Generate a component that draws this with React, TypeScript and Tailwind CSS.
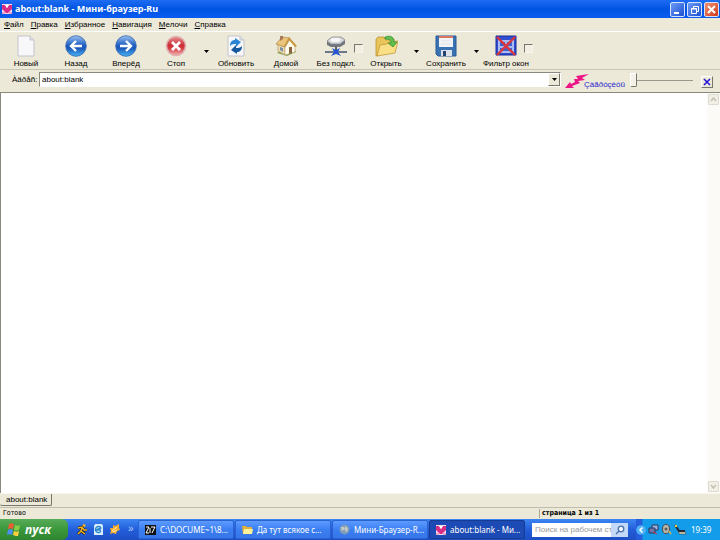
import type { ReactNode } from 'react';

const MENU = ['Файл', 'Правка', 'Избранное', 'Навигация', 'Мелочи', 'Справка'];

function AppIcon() {
  return (
    <svg width="10" height="10" viewBox="0 0 10 10" className="shrink-0">
      <rect width="10" height="10" fill="#f7dcec" />
      <path d="M0 1h3l2 3 2-3h3v4L6 9H4L0 5z" fill="#d92c86" />
      <path d="M3 1h4L5 4z" fill="#fff" />
      <path d="M0 8h3v2H0zM7 8h3v2H7z" fill="#e3a5ca" />
    </svg>
  );
}

function PageIcon({ children }: { children?: ReactNode }) {
  return (
    <svg width="22" height="22" viewBox="0 0 22 22">
      <path d="M3 1h12l4 4v16H3z" fill="#f8f8fb" stroke="#c3c3cb" />
      <path d="M15 1v4h4" fill="#e2e2ea" stroke="#c3c3cb" />
      {children}
    </svg>
  );
}

function RefreshIcon() {
  return (
    <PageIcon>
      <path d="M5 11c0-4 2-6 5-6V3l6 4-5 5V9c-2 0-4 0-6 2z" fill="#2a86d4" />
      <path d="M17 11c0 4-2 6-5 6v2l-6-4 5-5v3c2 0 4 0 6-2z" fill="#17599f" />
    </PageIcon>
  );
}

function RoundIcon({ kind }: { kind: 'back' | 'forward' | 'stop' }) {
  const red = kind === 'stop';
  return (
    <svg width="22" height="22" viewBox="0 0 22 22">
      <defs>
        <linearGradient id={`disc-${kind}`} x1="0" y1="0" x2="0" y2="1">
          <stop offset="0" stopColor={red ? '#e89292' : '#9fc0ee'} />
          <stop offset=".45" stopColor={red ? '#cb2f35' : '#2061c4'} />
          <stop offset=".6" stopColor={red ? '#d13b40' : '#1a56b8'} />
          <stop offset="1" stopColor={red ? '#f4b0b0' : '#49b4f4'} />
        </linearGradient>
      </defs>
      <circle cx="11" cy="11" r={red ? 9.5 : 10.3} fill={`url(#disc-${kind})`} stroke={red ? '#e0b0b0' : '#3567b4'} strokeWidth={red ? 1.6 : 0.8} />
      {kind === 'back' && <path d="M17 11H6M11 6l-5 5 5 5" fill="none" stroke="#fff" strokeWidth="2.4" />}
      {kind === 'forward' && <path d="M5 11h11M11 6l5 5-5 5" fill="none" stroke="#fff" strokeWidth="2.4" />}
      {red && <path d="M7 7l8 8M15 7l-8 8" stroke="#fff" strokeWidth="2.8" />}
    </svg>
  );
}

function HomeIcon() {
  return (
    <svg width="22" height="22" viewBox="0 0 22 22">
      <path d="M2 18l3-2 6 2 9-3 1 2-9 4z" fill="#8aa552" />
      <path d="M3 9l7 3v8l-7-4z" fill="#efdcb0" stroke="#a58c62" strokeWidth=".6" />
      <path d="M10 12l5-7 5 6v6l-10 3z" fill="#fffaea" stroke="#b39c70" strokeWidth=".6" />
      <path d="M1 9l6-7 8 1-5 9z" fill="#eac47a" stroke="#a27c40" strokeWidth=".6" />
      <path d="M14 2l8 9-2 1-6-7-4 7-1-1z" fill="#c9963f" />
      <path d="M5 1h3v3L5 6z" fill="#a97b56" />
      <path d="M14 12h3v6l-3 1z" fill="#8a6440" />
      <path d="M5 12l3 1v4l-3-2z" fill="#7b8fa5" />
    </svg>
  );
}

function OfflineIcon() {
  return (
    <svg width="24" height="22" viewBox="0 0 24 22">
      <path d="M3 6l5-4h9l4 3v4l-5 3H7l-4-2z" fill="#73767c" />
      <path d="M3 6l5-4h9l4 3-5 4H7z" fill="#d6d7db" stroke="#85868b" strokeWidth=".7" />
      <path d="M8 3h7l2 2-3 2H8L6 5z" fill="#f6f6f7" />
      <path d="M1 17h22" stroke="#6c7888" strokeWidth="2" />
      <path d="M12 12v4" stroke="#555e68" strokeWidth="2" />
      <path d="M8 13l4 2 4-2-2 4 3 4-5-2-5 2 3-4z" fill="#2355d5" />
    </svg>
  );
}

function OpenIcon() {
  return (
    <svg width="23" height="22" viewBox="0 0 23 22">
      <path d="M1 4l2-2h6l2 3 8-1v5L5 20l-4 1z" fill="#e9c559" stroke="#b18a2c" strokeWidth=".7" />
      <path d="M2 21L5 10l7-1 2-2 9-1-3 12z" fill="#fbdf86" stroke="#c39a38" strokeWidth=".8" />
      <path d="M10 2c6-2 9 0 9 5h3l-4 5-5-4h3c0-3-2-4-6-4z" fill="#62bf4d" stroke="#2c8b32" strokeWidth=".7" />
    </svg>
  );
}

function SaveIcon() {
  return (
    <svg width="22" height="22" viewBox="0 0 22 22">
      <path d="M1 1h20v20H3l-2-2z" fill="#3b73b2" stroke="#285a98" />
      <path d="M4 1h14v11H4z" fill="#f3f4f7" />
      <path d="M4 1h14v2H4z" fill="#da765e" />
      <path d="M6 6h10M6 9h10" stroke="#dfe1e7" />
      <path d="M6 15h11v6H6z" fill="#dce1e9" />
      <path d="M8 16h3v5H8z" fill="#23446f" />
    </svg>
  );
}

function FilterIcon() {
  return (
    <svg width="22" height="22" viewBox="0 0 22 22">
      <path d="M1 1h20v19H1z" fill="#2f4fd0" stroke="#1c2f9c" />
      <path d="M3 5h16v13H3z" fill="#a9bbf0" />
      <path d="M5 7h5v4H5zM12 7h5v4h-5zM5 13h12v3H5z" fill="#3f62d2" />
      <path d="M2 2l18 18M20 2L2 20" stroke="#d8363e" strokeWidth="2.4" />
    </svg>
  );
}

function Tool({ label, icon, menu, check }: { label: string; icon: ReactNode; menu?: boolean; check?: boolean }) {
  return (
    <div className="flex shrink-0">
      <div className="relative w-[50px]">
        <button className="flex w-full flex-col items-center gap-[2px]">
          {icon}
          <span className="whitespace-nowrap leading-[10px]">{label}</span>
        </button>
        {check && (
          <input
            type="checkbox"
            aria-label={label}
            className="absolute left-[43px] top-[9px] size-[9px] appearance-none border border-[#f7f5ec] border-l-[#77756c] border-t-[#77756c] bg-[#f2efe2]"
          />
        )}
      </div>
      {menu && (
        <button aria-label={`${label}: список`} className="flex w-[10px] justify-center pt-[15px]">
          <svg width="5" height="3" viewBox="0 0 5 3"><path d="M0 0h5L2.500 3z" fill="#000" /></svg>
        </button>
      )}
    </div>
  );
}

function WindowButton({ kind }: { kind: 'min' | 'restore' | 'close' }) {
  const tone = kind === 'close' ? 'bg-linear-to-br from-[#f09070] to-[#cf3512]' : 'bg-linear-to-br from-[#6d9af5] to-[#1c4fd0]';
  return (
    <button aria-label={kind} className={`size-[15px] rounded-[2px] border border-[#d5e2fb] ${tone}`}>
      <svg width="13" height="13" viewBox="0 0 13 13" fill="none" stroke="#fff">
        {kind === 'min' && <path d="M3 10h5" strokeWidth="2" />}
        {kind === 'restore' && <path d="M5.500 5V3.500h5v5H9M3.500 5.500h5v5h-5zM3 6h6" />}
        {kind === 'close' && <path d="M3 3l7 7M10 3l-7 7" strokeWidth="2" />}
      </svg>
    </button>
  );
}

function ScrollButton({ up }: { up?: boolean }) {
  return (
    <button aria-label={up ? 'Вверх' : 'Вниз'} className="flex size-[11px] items-center justify-center rounded-[1px] border border-[#dddbd0] bg-[#f1efe6]">
      <svg width="7" height="5" viewBox="0 0 7 5" fill="none" stroke="#c3c1b5" strokeWidth="1.500">
        <path d={up ? 'M1 4l2.500-3L6 4' : 'M1 1l2.500 3L6 1'} />
      </svg>
    </button>
  );
}

function Folder() {
  return (
    <svg width="11" height="10" viewBox="0 0 11 10" className="shrink-0">
      <path d="M0 1h4l1 1h5v7H1z" fill="#dfb13a" />
      <path d="M1 9l1-5h9l-1 5z" fill="#fff09a" />
    </svg>
  );
}

function Task({ icon, text, active }: { icon: ReactNode; text: string; active?: boolean }) {
  const tone = active ? 'bg-[#1c4bb5] border-[#153b92]' : 'bg-linear-to-b from-[#5c9bff] via-[#3c7ff2] to-[#3576e8] border-[#2b62cf]';
  return (
    <button className={`flex h-[19px] min-w-[96px] items-center gap-[4px] whitespace-nowrap rounded-[2px] border pl-[6px] text-white ${tone}`}>
      {icon}
      {text}
    </button>
  );
}

export default function App() {
  return (
    <div className="flex h-screen flex-col overflow-hidden bg-[#ece9d8] font-['Liberation_Sans','Noto_Sans',sans-serif] text-[8px] leading-[10px] text-black">
      <header className="flex h-[18px] shrink-0 items-center gap-[3px] bg-linear-to-b from-[#1d6cf2] via-[#0054e3] to-[#0a5cf0] pl-[2px] pr-[1px]">
        <AppIcon />
        <h1 className="flex-1 font-['Noto_Sans',sans-serif] text-[9px] font-bold text-white">about:blank - Мини-браузер-Ru</h1>
        <div className="flex gap-[2px]">
          <WindowButton kind="min" />
          <WindowButton kind="restore" />
          <WindowButton kind="close" />
        </div>
      </header>

      <nav className="flex h-[14px] shrink-0 items-center gap-[7px] border-b border-white pl-[4px]">
        {MENU.map((m) => (
          <button key={m}><u>{m[0]}</u>{m.slice(1)}</button>
        ))}
      </nav>

      <div className="flex h-[38px] shrink-0 border-b border-[#c9c6b8] pl-[1px] pt-[3px]">
        <Tool label="Новый" icon={<PageIcon />} />
        <Tool label="Назад" icon={<RoundIcon kind="back" />} />
        <Tool label="Вперёд" icon={<RoundIcon kind="forward" />} />
        <Tool label="Стоп" icon={<RoundIcon kind="stop" />} menu />
        <Tool label="Обновить" icon={<RefreshIcon />} />
        <Tool label="Домой" icon={<HomeIcon />} />
        <Tool label="Без подкл." icon={<OfflineIcon />} check />
        <Tool label="Открыть" icon={<OpenIcon />} menu />
        <Tool label="Сохранить" icon={<SaveIcon />} menu />
        <Tool label="Фильтр окон" icon={<FilterIcon />} check />
      </div>

      <form className="flex h-[22px] shrink-0 items-start pl-[12px] pr-[7px] pt-[2px]" onSubmit={(e) => e.preventDefault()}>
        <label htmlFor="address" className="w-[27px] pt-[3px]">Àäðåñ:</label>
        <div className="flex h-[15px] min-w-0 flex-1 border border-[#8b897e] border-b-white border-r-white bg-white">
          <input id="address" defaultValue="about:blank" className="min-w-0 flex-1 px-[2px] outline-none" />
          <button type="button" aria-label="Список адресов" className="flex w-[12px] items-center justify-center border border-white border-b-[#77756c] border-r-[#77756c] bg-[#ece9d8]">
            <svg width="5" height="3" viewBox="0 0 5 3"><path d="M0 0h5L2.500 3z" fill="#000" /></svg>
          </button>
        </div>
        <button type="submit" className="flex w-[66px] items-start pl-[4px] pt-[1px] text-[#2a1fd0]">
          <svg width="24" height="16" viewBox="0 0 24 16" className="shrink-0">
            <path d="M24 1L11 3l2 3-4 0 1 3-4 2-1-2L0 15l9 0-2-2 8-3-2-2 7-1-3-2z" fill="#ed1586" />
          </svg>
          <span className="-ml-[5px] pt-[7px]">Çàãðóçèòü</span>
        </button>
        <input
          type="range"
          aria-label="Масштаб"
          defaultValue="0"
          className="ml-[3px] mr-[8px] h-[16px] w-[63px] appearance-none bg-[linear-gradient(#9b998e,#9b998e)] bg-[length:100%_1px] bg-center bg-no-repeat [&::-webkit-slider-thumb]:h-[14px] [&::-webkit-slider-thumb]:w-[7px] [&::-webkit-slider-thumb]:appearance-none [&::-webkit-slider-thumb]:rounded-b-[2px] [&::-webkit-slider-thumb]:border [&::-webkit-slider-thumb]:border-white [&::-webkit-slider-thumb]:border-b-[#77756c] [&::-webkit-slider-thumb]:border-r-[#77756c] [&::-webkit-slider-thumb]:bg-[#f4f2e8]"
        />
        <button type="button" aria-label="Закрыть" className="mt-[4px] flex size-[12px] items-center justify-center border border-white border-b-[#77756c] border-r-[#77756c]">
          <svg width="8" height="8" viewBox="0 0 8 8"><path d="M1 1l6 6M7 1L1 7" stroke="#2b16d8" strokeWidth="1.600" /></svg>
        </button>
      </form>

      <main className="flex min-h-0 flex-1 border-l border-t border-[#8b897e] bg-white">
        <div className="flex-1" />
        <div className="flex w-[13px] flex-col items-center justify-between bg-[#fbfaf7] py-px">
          <ScrollButton up />
          <ScrollButton />
        </div>
      </main>

      <div className="flex h-[14px] shrink-0 items-start border-t border-[#f7f5ec]">
        <button className="h-[12px] rounded-b-[2px] border-b border-r border-[#77756c] pl-[6px] pr-[4px]">about:blank</button>
      </div>
      <footer className="flex h-[12px] shrink-0 items-center border-t border-[#c0bdae] font-['DejaVu_Sans_Condensed','DejaVu_Sans',sans-serif] text-[7px] leading-[9px]">
        <span className="flex-1 pl-[3px]">Готово</span>
        <span className="w-[181px] border-l border-[#aca899] pl-[2px] font-bold">страница 1 из 1</span>
      </footer>

      <div className="flex h-[21px] shrink-0 items-center bg-linear-to-b from-[#3d86f3] via-[#245edb] to-[#1c4ec4] text-white">
        <button className="flex h-full w-[68px] items-center gap-[4px] rounded-r-[6px] bg-linear-to-b from-[#58ab58] via-[#3b983b] to-[#2f852f] pl-[7px] font-['Open_Sans','Noto_Sans',sans-serif] text-[12px] font-bold italic">
          <svg width="14" height="13" viewBox="0 0 14 13">
            <path d="M2 1c2-1 3-1 5 0L6 6C4 5 3 5 1 6z" fill="#ee5d30" />
            <path d="M8 2c2 1 3 1 5 0l-1 5c-2 1-3 1-5 0z" fill="#85cf47" />
            <path d="M1 7c2-1 3-1 5 0l-1 5c-2-1-3-1-5 0z" fill="#4b8ff5" />
            <path d="M7 8c2 1 3 1 5 0l-1 5c-2 0-3 0-5-1z" fill="#fbd043" />
          </svg>
          пуск
        </button>
        <div className="flex w-[70px] items-center gap-[5px] pl-[9px]">
          <svg width="11" height="11" viewBox="0 0 11 11">
            <circle cx="7" cy="1.500" r="1.500" fill="#f4b223" />
            <path d="M1 4l4-1 2 3 3 0M5 4L4 7l4 3M4 7l-3 3" fill="none" stroke="#1b1b1b" strokeWidth="2.600" />
            <path d="M1 4l4-1 2 3 3 0M5 4L4 7l4 3M4 7l-3 3" fill="none" stroke="#f4b223" strokeWidth="1.500" />
          </svg>
          <svg width="11" height="11" viewBox="0 0 11 11">
            <path d="M2 0h7l1 2v9H1V2z" fill="#d9eefb" />
            <path d="M8 7a3 3 0 1 1 0-3L3 6h5" fill="none" stroke="#2b86cf" strokeWidth="1.400" />
          </svg>
          <svg width="11" height="11" viewBox="0 0 11 11">
            <path d="M4 1l2 1 4-2v4l1 2-3 1-1 3-3-1-3 1 1-3-1-3 3 0z" fill="#f9ac2f" />
            <path d="M3 7l5-4M4 8l4-2" stroke="#fff0b0" />
          </svg>
          <span className="self-start pl-[3px] text-[10px] leading-[10px] text-[#b9d2fa]">»</span>
        </div>
        <div className="flex flex-1 gap-[1px] font-['Noto_Sans',sans-serif]">
          <Task text="C:\DOCUME~1\8..." icon={
            <svg width="11" height="10" viewBox="0 0 11 10" className="shrink-0">
              <path d="M0 0h11v10H0z" fill="#101010" />
              <path d="M1 2h3L1 8h3M5 3v5M6 2h4L7 8" fill="none" stroke="#fff" />
            </svg>
          } />
          <Task text="Да тут всякое с..." icon={<Folder />} />
          <Task text="Мини-Браузер-R..." icon={
            <svg width="11" height="11" viewBox="0 0 11 11" className="shrink-0">
              <circle cx="5.500" cy="5.500" r="5" fill="#7f9cb8" />
              <path d="M2 3h3l1 2-3 2zM6 2l3 2-1 4-2-1z" fill="#c3cbc9" />
            </svg>
          } />
          <Task text="about:blank - Ми..." icon={<AppIcon />} active />
        </div>
        <div className="mr-[8px] flex h-[14px] w-[96px] bg-white">
          <input aria-label="Поиск" placeholder="Поиск на рабочем ст" className="min-w-0 flex-1 pl-[3px] font-['Liberation_Sans',sans-serif] text-black outline-none placeholder:text-[#999999]" />
          <button aria-label="Найти" className="flex w-[17px] items-center justify-center bg-[#c4d8f7]">
            <svg width="10" height="10" viewBox="0 0 10 10" fill="none" stroke="#4b6fae" strokeWidth="1.300">
              <circle cx="6" cy="4" r="2.800" fill="#edf6ff" /><path d="M4 6L1 9" />
            </svg>
          </button>
        </div>
        <div className="flex h-full w-[84px] items-center gap-[2px] bg-linear-to-r from-[#245edb] from-[6px] to-[#129cea] to-[7px]">
          <button aria-label="Показать значки">
            <svg width="10" height="10" viewBox="0 0 10 10">
              <circle cx="5" cy="5" r="4.800" fill="#4fb0f8" /><path d="M6.500 2.500L4 5l2.500 2.500" fill="none" stroke="#fff" strokeWidth="1.600" />
            </svg>
          </button>
          <svg width="11" height="11" viewBox="0 0 11 11">
            <path d="M4 1h6v5H4z" fill="#9eb6dd" stroke="#263765" /><path d="M1 4h6v5H1z" fill="#6a79a9" stroke="#263765" /><path d="M5 8l4 2" stroke="#d33" />
          </svg>
          <svg width="11" height="11" viewBox="0 0 11 11">
            <ellipse cx="5" cy="5" rx="3.500" ry="4.500" fill="#b8b9ad" stroke="#4a4b50" /><circle cx="5" cy="5" r="1.500" fill="#57585a" /><path d="M8 7l2 3" stroke="#d8b760" strokeWidth="1.400" />
          </svg>
          <svg width="13" height="11" viewBox="0 0 13 11">
            <path d="M1 1l4 6h6" fill="none" stroke="#22262f" strokeWidth="2" /><path d="M4 8h7l1 2H6z" fill="#eee9c0" stroke="#444" strokeWidth=".6" /><circle cx="2" cy="2" r="1.200" fill="#eccb45" />
          </svg>
          <time className="ml-[2px] font-['Noto_Sans',sans-serif]">19:39</time>
        </div>
      </div>
    </div>
  );
}
